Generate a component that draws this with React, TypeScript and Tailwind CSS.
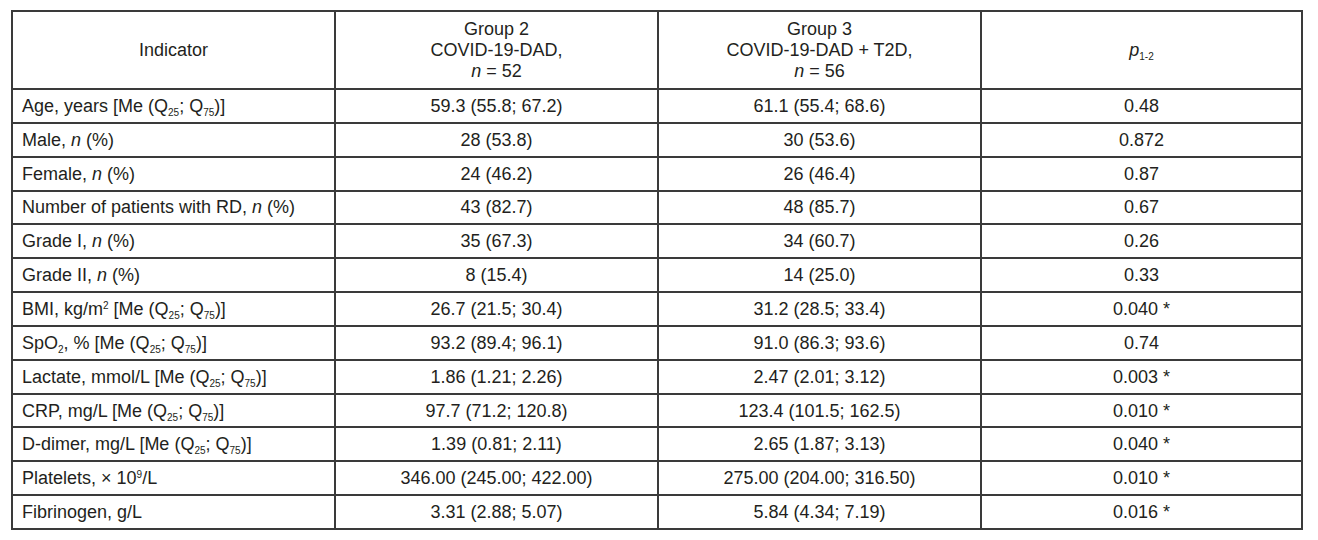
const Sub = ({ children }: { children: React.ReactNode }) => (
  <sub className="text-[10px] bottom-[-4px]">{children}</sub>
);

const Sup = ({ children }: { children: React.ReactNode }) => (
  <sup className="text-[10px] top-[-6px]">{children}</sup>
);

const Q = () => (
  <>
    [Me (Q<Sub>25</Sub>; Q<Sub>75</Sub>)]
  </>
);

const N = () => <i>n</i>;

const rows: { label: React.ReactNode; g2: string; g3: string; p: string }[] = [
  { label: <>Age, years <Q /></>, g2: "59.3 (55.8; 67.2)", g3: "61.1 (55.4; 68.6)", p: "0.48" },
  { label: <>Male, <N /> (%)</>, g2: "28 (53.8)", g3: "30 (53.6)", p: "0.872" },
  { label: <>Female, <N /> (%)</>, g2: "24 (46.2)", g3: "26 (46.4)", p: "0.87" },
  { label: <>Number of patients with RD, <N /> (%)</>, g2: "43 (82.7)", g3: "48 (85.7)", p: "0.67" },
  { label: <>Grade I, <N /> (%)</>, g2: "35 (67.3)", g3: "34 (60.7)", p: "0.26" },
  { label: <>Grade II, <N /> (%)</>, g2: "8 (15.4)", g3: "14 (25.0)", p: "0.33" },
  { label: <>BMI, kg/m<Sup>2</Sup> <Q /></>, g2: "26.7 (21.5; 30.4)", g3: "31.2 (28.5; 33.4)", p: "0.040 *" },
  { label: <>SpO<Sub>2</Sub>, % <Q /></>, g2: "93.2 (89.4; 96.1)", g3: "91.0 (86.3; 93.6)", p: "0.74" },
  { label: <>Lactate, mmol/L <Q /></>, g2: "1.86 (1.21; 2.26)", g3: "2.47 (2.01; 3.12)", p: "0.003 *" },
  { label: <>CRP, mg/L <Q /></>, g2: "97.7 (71.2; 120.8)", g3: "123.4 (101.5; 162.5)", p: "0.010 *" },
  { label: <>D-dimer, mg/L <Q /></>, g2: "1.39 (0.81; 2.11)", g3: "2.65 (1.87; 3.13)", p: "0.040 *" },
  {
    label: <>Platelets, × 10<Sup>9</Sup>/L</>,
    g2: "346.00 (245.00; 422.00)",
    g3: "275.00 (204.00; 316.50)",
    p: "0.010 *",
  },
  { label: <>Fibrinogen, g/L</>, g2: "3.31 (2.88; 5.07)", g3: "5.84 (4.34; 7.19)", p: "0.016 *" },
];

const cell = "border-2 border-[#3a3a3a] px-[9px] align-middle";

export default function App() {
  return (
    <div className="w-[1318px] h-[540px] bg-white pt-[10px] pl-[11px] font-['Liberation_Sans',Arial,sans-serif] text-[18px] text-[#231f20]">
      <table className="w-[1290px] table-fixed border-collapse">
        <colgroup>
          <col className="w-[323px]" />
          <col className="w-[323px]" />
          <col className="w-[323px]" />
          <col className="w-[321px]" />
        </colgroup>
        <thead>
          <tr className="h-[78px] leading-[21px]">
            <th className={`${cell} font-normal text-center`}>Indicator</th>
            <th className={`${cell} font-normal text-center`}>
              Group 2
              <br />
              COVID-19-DAD,
              <br />
              <i>n</i> = 52
            </th>
            <th className={`${cell} font-normal text-center`}>
              Group 3
              <br />
              COVID-19-DAD + T2D,
              <br />
              <i>n</i> = 56
            </th>
            <th className={`${cell} font-normal text-center`}>
              <i>p</i>
              <Sub>1-2</Sub>
            </th>
          </tr>
        </thead>
        <tbody>
          {rows.map((r, i) => (
            <tr key={i} className="h-[33.85px] leading-[20px]">
              <td className={`${cell} text-left`}>{r.label}</td>
              <td className={`${cell} text-center`}>{r.g2}</td>
              <td className={`${cell} text-center`}>{r.g3}</td>
              <td className={`${cell} text-center`}>{r.p}</td>
            </tr>
          ))}
        </tbody>
      </table>
    </div>
  );
}
